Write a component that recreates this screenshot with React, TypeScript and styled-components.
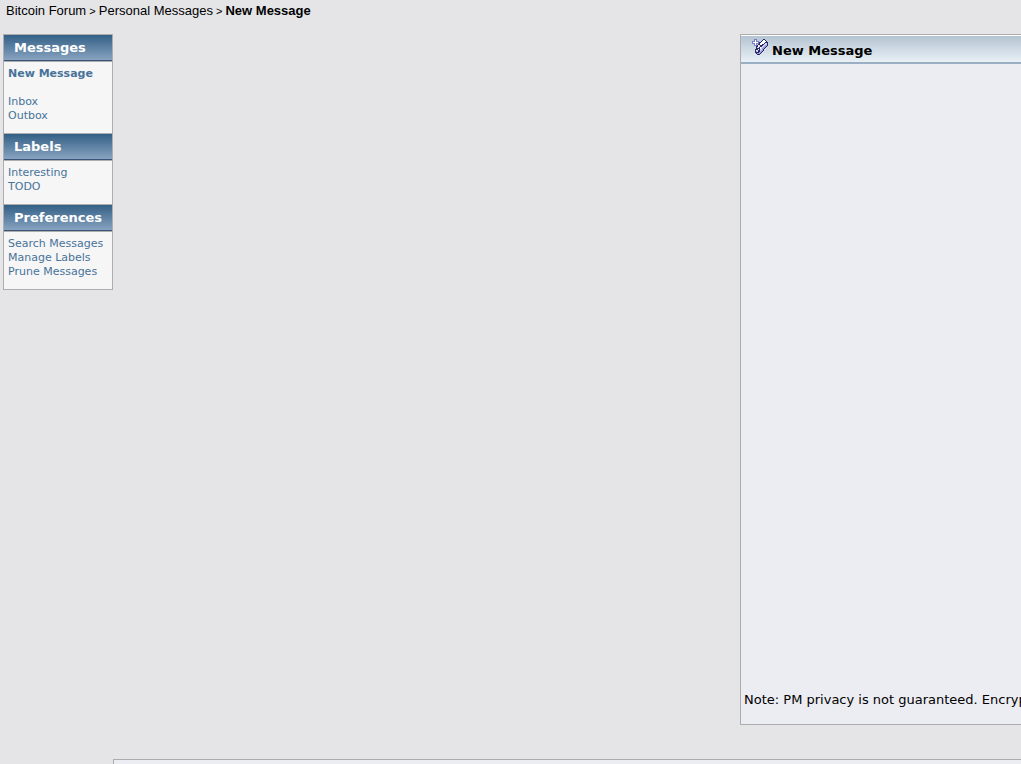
import React from "react";
import styled, { createGlobalStyle } from "styled-components";

const GlobalStyle = createGlobalStyle`
  * { box-sizing: border-box; }
  html { overflow: hidden; }
  body {
    margin: 0;
    background: #e5e5e8;
    color: #000;
    font: 13px/16px "DejaVu Sans", sans-serif;
  }
`;

const Page = styled.div`
  display: flex;
  flex-direction: column;
  min-height: 100vh;
  overflow: hidden;
`;

const Breadcrumbs = styled.nav`
  padding: 3px 6px 0;
  height: 34px;
  font: 11px/16px "Liberation Sans", sans-serif;
  white-space: pre;
`;

const Crumb = styled.a<{ $current?: boolean }>`
  color: #000;
  font-size: 13px;
  font-weight: ${(p) => (p.$current ? "bold" : "normal")};
  text-decoration: none;
`;

const Columns = styled.div`
  display: grid;
  grid-template-columns: 110px minmax(0, 627fr) minmax(0, 281fr);
  padding-left: 3px;
  align-items: start;
`;

const Sidebar = styled.aside`
  border: 1px solid #adadad;
  background: #f6f6f6;
  font-size: 11px;
  line-height: 14px;
`;

const SectionTitle = styled.h2`
  margin: 0;
  height: 26px;
  padding: 0 10px;
  border-bottom: 1px solid #375576;
  background: linear-gradient(#336086, #88a3c0);
  color: #fff;
  font-size: 13px;
  line-height: 26px;
`;

const Section = styled.section`
  & + & {
    border-top: 1px solid #adadad;
  }
`;

const Links = styled.ul`
  margin: 0;
  padding: 5px 4px 10px;
  border-top: 1px solid #adadad;
  list-style: none;
  white-space: nowrap;
`;

const LinkItem = styled.li<{ $primary?: boolean }>`
  font-weight: ${(p) => (p.$primary ? "bold" : "normal")};
  margin-bottom: ${(p) => (p.$primary ? "14px" : "0")};
`;

const SideLink = styled.a`
  color: #47739a;
  text-decoration: none;
`;

const Panel = styled.main`
  grid-column: 3;
  display: flex;
  flex-direction: column;
  min-height: 691px;
  border: 1px solid #adadad;
  border-right: 0;
  background: #ecedf3;
  overflow: hidden;
`;

const PanelTitle = styled.h1`
  display: flex;
  align-items: flex-start;
  gap: 4px;
  margin: 0;
  height: 29px;
  padding: 3px 10px 0;
  border-top: 1px solid #fff;
  border-bottom: 2px solid #9bafc4;
  background: linear-gradient(#b4c4d2, #e9f0f6);
  font-size: 13px;
  line-height: 24px;
`;

const Note = styled.p`
  margin: auto 0 16px;
  padding-left: 3px;
  white-space: nowrap;
`;

const Footer = styled.footer`
  flex: 1;
  margin: 34px 0 0 113px;
  border: solid #adadad;
  border-width: 1px 0 0 1px;
  background: #ecedf3;
`;

// Pixel map of the "compose" icon: a pen with a small plus sign.
const composePixels = [
  "...bbb......dd...",
  "...bwb.....dwwd..",
  ".bbbwbbb..dwwwwd.",
  ".bwwwwwbddwwwwddd",
  ".bbbwbbbdwwwwdlld",
  "...bwb.ddwwddllld",
  "...bbbdwldddllmmd",
  ".....ddwlddllmmd.",
  ".....dlldwllmmd..",
  ".....ddddwlmmd...",
  "....dddwdllmd....",
  "....dwlddlmmd....",
  "....dmlddmmd.....",
  "....ddddmmd......",
  ".....dmmmd.......",
  "......ddd........",
];

const inks: Record<string, string> = {
  b: "#7c7cc4",
  w: "#fff",
  d: "#2a2a62",
  l: "#d0d0fa",
  m: "#9c9ce4",
};

const ComposeIcon = () => (
  <svg width="17" height="17" viewBox="0 0 17 17" aria-hidden="true" shapeRendering="crispEdges">
    {Object.entries(inks).map(([ink, fill]) => (
      <path
        key={ink}
        fill={fill}
        d={composePixels
          .map((row, y) => [...row].map((c, x) => (c === ink ? `M${x} ${y}h1v1h-1z` : "")).join(""))
          .join("")}
      />
    ))}
  </svg>
);

const sections = [
  { title: "Messages", links: ["New Message", "Inbox", "Outbox"] },
  { title: "Labels", links: ["Interesting", "TODO"] },
  { title: "Preferences", links: ["Search Messages", "Manage Labels", "Prune Messages"] },
];

export default function App() {
  return (
    <>
      <GlobalStyle />
      <Page>
        <Breadcrumbs aria-label="Breadcrumb">
          <Crumb href="#forum">Bitcoin Forum</Crumb>
          {" > "}
          <Crumb href="#pm">Personal Messages</Crumb>
          {" > "}
          <Crumb href="#new" $current>New Message</Crumb>
        </Breadcrumbs>
        <Columns>
          <Sidebar>
            {sections.map((s) => (
              <Section key={s.title}>
                <SectionTitle>{s.title}</SectionTitle>
                <Links>
                  {s.links.map((l) => (
                    <LinkItem key={l} $primary={l === "New Message"}>
                      <SideLink href="#pm">{l}</SideLink>
                    </LinkItem>
                  ))}
                </Links>
              </Section>
            ))}
          </Sidebar>
          <Panel>
            <PanelTitle>
              <ComposeIcon />
              New Message
            </PanelTitle>
            <Note>Note: PM privacy is not guaranteed. Encrypt</Note>
          </Panel>
        </Columns>
        <Footer />
      </Page>
    </>
  );
}
